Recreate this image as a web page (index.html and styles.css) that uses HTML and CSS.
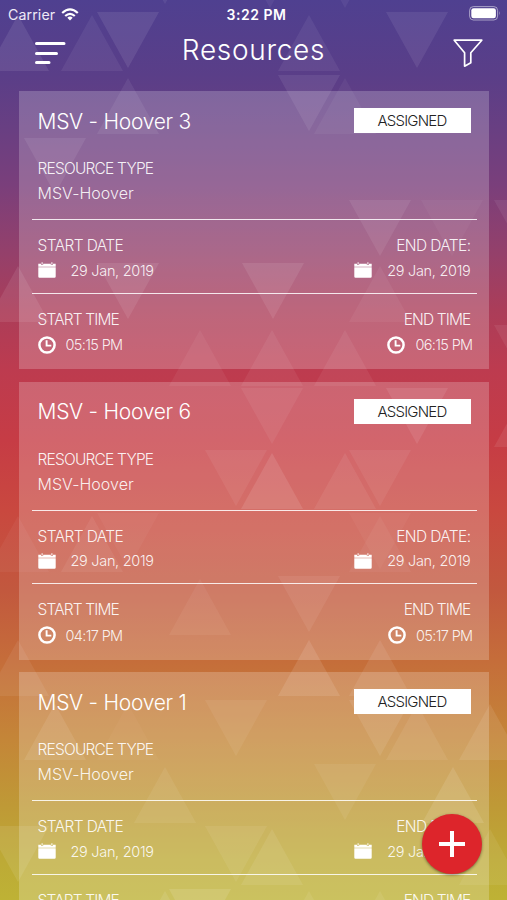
FILE: index.html
```html
<!DOCTYPE html>
<html lang="en">
<head>
<meta charset="utf-8">
<title>Resources</title>
<link rel="stylesheet" href="styles.css">
</head>
<body>
<svg class="defs" width="0" height="0" aria-hidden="true">
  <symbol id="calendar" viewBox="0 0 18 16"><path d="M3.6 0.2h1v2h-1zM13.4 0.2h1v2h-1z"/><path d="M.3 1.8H3v1h2.2v-1h7.6v1H15v-1h2.7V4.700H.3z"/><path d="M.3 5.2h17.4v9.400q0 1.2-1.2 1.2h-15Q.3 15.800.3 14.600z"/></symbol>
  <symbol id="clock" viewBox="0 0 18 18"><circle cx="9" cy="9" r="7.6" fill="none" stroke="currentColor" stroke-width="2.5"/><path d="M8.600 4.300V9.600H13.300" fill="none" stroke="currentColor" stroke-width="1.900"/></symbol>
  <symbol id="down" viewBox="0 0 62 56"><path d="M0 0h62L31 56z"/></symbol>
  <symbol id="up" viewBox="0 0 62 56"><path d="M31 0l31 56H0z"/></symbol>
</svg>
<div class="screen">
  <svg class="pattern" viewBox="0 0 507 900" aria-hidden="true" id="pattern"></svg>
  <div class="status">
    <div class="carrier"><span>Carrier</span>
      <svg width="18" height="13" viewBox="0 0 18 13" fill="none" stroke="#fff" stroke-width="2.200"><path d="M1.200 5Q9-2.200 16.800 5"/><path d="M4.200 8Q9 3.600 13.800 8"/><path d="M6.300 9.700Q9 7.500 11.700 9.700L9 12.500z" fill="#fff" stroke="none"/></svg>
    </div>
    <div class="time">3:22 PM</div>
    <svg class="battery" width="32" height="15" viewBox="0 0 32 15"><rect x=".6" y=".6" width="28" height="13.400" rx="3.800" fill="none" stroke="#fff" stroke-opacity=".5"/><rect x="2.300" y="2.300" width="24.600" height="10" rx="2.300" fill="#fff"/><path d="M30.200 5q1.500 2.300 0 4.600z" fill="#fff" opacity=".5"/></svg>
  </div>
  <header class="bar">
    <svg width="32" height="24" viewBox="0 0 32 24" stroke="#fff" stroke-width="3" stroke-linecap="round"><path d="M2.500 2.500h27.500M2.500 12.500h20M2.500 21.500h12.500"/></svg>
    <h1>Resources</h1>
    <svg width="30" height="29" viewBox="0 0 30 29" fill="none" stroke="#fff" stroke-width="1.700" stroke-linejoin="round"><path d="M1.200 1.200h27.600L17.800 13.700v10L11.600 27.200V13.700z"/></svg>
  </header>
  <main class="list" id="list"></main>
  <button class="fab" aria-label="Add"><svg width="26" height="26" viewBox="0 0 26 26" stroke="#fff" stroke-width="4"><path d="M13 0v26M0 13h26"/></svg></button>
</div>
<script src="app.js"></script>
</body>
</html>
```
FILE: styles.css
```css
* { box-sizing: border-box; }
body { margin: 0; overflow: hidden; font-family: Inter, "Open Sans", sans-serif; font-weight: 300; color: #fff; }
.defs { position: absolute; }
.screen {
  position: relative; height: 900px; overflow: hidden;
  background: linear-gradient(#4f4090 0, #5a3e88 75px, #693f82 130px, #7a3f7b 185px, #95406a 255px, #ab3d59 310px, #bd3b4f 370px, #c63c45 440px, #c9483f 510px, #c2583e 590px, #c56d3a 660px, #c48638 740px, #bf9936 805px, #bdaa36 860px, #beb235 900px);
}
.pattern { position: absolute; inset: 0; width: 507px; height: 900px; fill: #fff; opacity: .85; filter: blur(.5px); }
.status { position: relative; display: grid; grid-template-columns: 1fr auto 1fr; align-items: center; height: 28px; padding: 0 6px 0 8px; font-weight: 400; font-size: 14.200px; }
.carrier { display: flex; align-items: center; gap: 6px; letter-spacing: .1px; color: #eeeaf7; }
.time { font-weight: 600; font-size: 14px; letter-spacing: .500px; transform: translateX(2px); }
.battery { justify-self: end; margin-top: -2px; }
.bar { position: relative; display: flex; justify-content: space-between; align-items: center; height: 63px; padding: 0 24px 15px 34px; }
.bar svg { margin-top: 2px; }
.bar h1 { margin: 0; font-size: 28px; line-height: 44px; font-weight: 300; letter-spacing: .700px; transform: translate(-6px, -2px); }
.list { position: relative; display: grid; gap: 12.500px; padding: 0 18px 0 19px; }
.card { height: 278px; padding: 0 12.500px; background: rgba(255, 255, 255, .21); }
.intro { height: 129px; padding: 17px 6px 0; border-bottom: 1.500px solid rgba(255, 255, 255, .85); }
.heading { display: flex; justify-content: space-between; align-items: center; height: 25px; }
.heading h2 { margin: 1px 0 0; font-size: 21px; font-weight: 300; letter-spacing: -.280px; }
.badge { width: 117px; height: 25px; background: #fff; color: #222; text-align: center; font-size: 15px; line-height: 25px; letter-spacing: -.800px; }
.label { font-size: 15.500px; line-height: 24px; letter-spacing: -.600px; color: rgba(255, 255, 255, .92); }
.intro .label { margin-top: 24px; letter-spacing: -.800px; }
.intro .value { font-size: 16px; line-height: 24px; letter-spacing: .05px; color: rgba(255, 255, 255, .9); }
.row { display: flex; justify-content: space-between; height: 73.500px; padding: 14px 6px 0; }
.dates { border-bottom: 1.500px solid rgba(255, 255, 255, .85); }
.end { display: flex; flex-direction: column; align-items: flex-end; }
.value { color: rgba(255, 255, 255, .9); }
.stamp { display: flex; align-items: center; height: 24px; font-size: 14.500px; letter-spacing: -.300px; }
.stamp svg { width: 18px; height: 16px; margin-right: 15px; fill: #fff; }
.times .label { letter-spacing: -.850px; }
.times .stamp { margin-top: 1px; letter-spacing: -.650px; }
.times .stamp svg { height: 18px; margin-right: 10px; fill: none; color: #fff; }
.times .end .stamp { margin-right: -2px; }
.fab { position: absolute; left: 422px; top: 814px; width: 60px; height: 60px; padding: 0; display: grid; place-items: center; border: 0; border-radius: 50%; background: #dd252b; box-shadow: 0 1px 3px rgba(0, 0, 0, .45); }
```
FILE: app.js
```js
// Background triangles: centre x, top y, opacity
const down = [[128,12,.1],[417,12,.09],[309,75,.09],[55,138,.09],[380,200,.09],[452,200,.04],[525,200,.08],[128,263,.1],[273,263,.1],[525,325,.08],[272,388,.07],[417,388,.1],[236,450,.07],[380,450,.07],[128,513,.04],[380,513,.04],[309,576,.08],[236,700,.07],[380,700,.1],[345,764,.07],[18,826,.1],[236,826,.08],[200,889,.12],[165,-52,.08],[270,-48,.06],[345,-48,.06]];
const up = [[18,15,.1],[92,15,.07],[128,78,.08],[309,15,.07],[345,78,.05],[18,266,.1],[200,330,.06],[272,330,.07],[345,330,.07],[380,266,.06],[272,453,.12],[345,453,.08],[18,516,.05],[92,516,.07],[380,516,.05],[200,579,.06],[309,640,.12],[380,640,.09],[18,640,.08],[55,704,.1],[128,704,.03],[490,704,.1],[417,704,.08],[165,767,.08],[453,767,.12],[272,829,.09],[490,829,.08],[165,891,.1],[309,891,.08],[380,891,.08],[525,391,.09]];
const draw = (id, items) => items.map(([x, y, o]) =>
  `<use href="#${id}" x="${x - 31}" y="${y}" width="62" height="56" opacity="${o}"/>`).join('');
document.getElementById('pattern').innerHTML = draw('down', down) + draw('up', up);

const resources = [
  ['MSV - Hoover 3', '05:15 PM', '06:15 PM'],
  ['MSV - Hoover 6', '04:17 PM', '05:17 PM'],
  ['MSV - Hoover 1', '04:17 PM', '05:17 PM']
];
const stamp = (icon, text) => `<div class="stamp"><svg><use href="#${icon}"/></svg><span class="value">${text}</span></div>`;
document.getElementById('list').innerHTML = resources.map(([name, start, end]) => `
  <article class="card">
    <section class="intro">
      <div class="heading"><h2>${name}</h2><span class="badge">ASSIGNED</span></div>
      <div class="label">RESOURCE TYPE</div><div class="value">MSV-Hoover</div>
    </section>
    <section class="row dates">
      <div><div class="label">START DATE</div>${stamp('calendar', '29 Jan, 2019')}</div>
      <div class="end"><div class="label">END DATE:</div>${stamp('calendar', '29 Jan, 2019')}</div>
    </section>
    <section class="row times">
      <div><div class="label">START TIME</div>${stamp('clock', start)}</div>
      <div class="end"><div class="label">END TIME</div>${stamp('clock', end)}</div>
    </section>
  </article>`).join('');
```
